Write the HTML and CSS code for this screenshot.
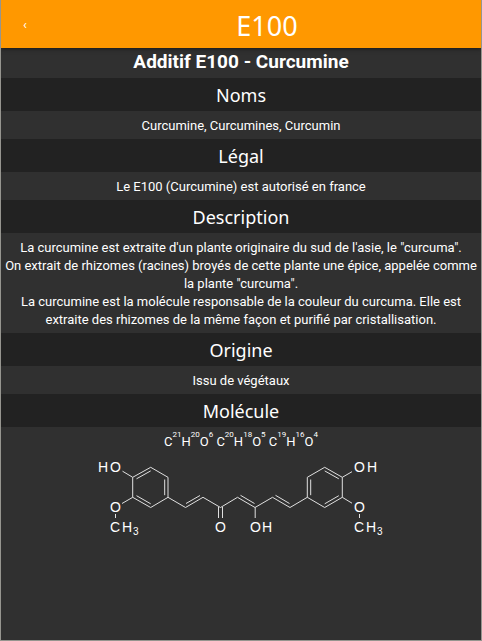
FILE: index.html
```
<!DOCTYPE html>
<html lang="fr">
<head>
<meta charset="utf-8">
<meta name="viewport" content="width=device-width, initial-scale=1">
<title>E100</title>
<link rel="stylesheet" href="styles.css">
</head>
<body>
<header class="bar">
  <a class="back" href="#" aria-label="Retour">‹</a>
  <h1 class="bar-title">E100</h1>
</header>
<main class="sheet">
  <h2 class="name">Additif E100 - Curcumine</h2>
  <h3 class="heading">Noms</h3>
  <p class="text">Curcumine, Curcumines, Curcumin</p>
  <h3 class="heading">Légal</h3>
  <p class="text">Le E100 (Curcumine) est autorisé en france</p>
  <h3 class="heading">Description</h3>
  <p class="text">La curcumine est extraite d'un plante originaire du sud de l'asie, le "curcuma".<br>On extrait de rhizomes (racines) broyés de cette plante une épice, appelée comme la plante "curcuma".<br>La curcumine est la molécule responsable de la couleur du curcuma. Elle est extraite des rhizomes de la même façon et purifié par cristallisation.</p>
  <h3 class="heading">Origine</h3>
  <p class="text">Issu de végétaux</p>
  <h3 class="heading">Molécule</h3>
  <p class="text formula">C<sup>21</sup>H<sup>20</sup>O<sup>6</sup> C<sup>20</sup>H<sup>18</sup>O<sup>5</sup> C<sup>19</sup>H<sup>16</sup>O<sup>4</sup></p>
  <svg class="molecule" viewBox="90 455 302 85" width="302" height="85" role="img" aria-label="Curcumine">
    <g class="bonds">
      <path d="M132.7 477.3L150.7 467.3L168 477.3V497.3L150.7 507.5L132.7 497.3Z"/>
      <path d="M136.5 478.8L150.7 470.9M164.7 479.5V495.2M150.7 503.8L136.5 495.7"/>
      <path d="M132.7 477.3L122.5 471.2M132.7 497.3L122 503.5M115.5 514V518"/>
      <path d="M168 497.3L185.5 507.5L203 497.3L220.5 507.5L237.5 497.3L255 507.5L272.5 497.3L290 507.5L307.3 497.3"/>
      <path d="M186 503.5L200 495.5M240.5 495.3L254.5 503.5M275.5 495.3L289.5 503.5"/>
      <path d="M218.5 507V518M222.5 507V518M255.2 507.5V518"/>
      <path d="M307.3 477.3L324.7 467.3L342.3 477.3V497.3L324.7 507.5L307.3 497.3Z"/>
      <path d="M324.7 470.9L338.8 478.8M310.7 479.5V495.2M324.7 503.8L338.8 495.7"/>
      <path d="M342.3 477.3L352 471.7M342.3 497.3L352 503.2M359.5 514V518"/>
    </g>
    <g class="atoms">
      <text x="98 110" y="472">HO</text>
      <text x="110" y="512">O</text>
      <text x="110 122" y="532">CH</text>
      <text class="index" x="133" y="535">3</text>
      <text x="215" y="532">O</text>
      <text x="250 262" y="532">OH</text>
      <text x="354 367" y="472">OH</text>
      <text x="354" y="512">O</text>
      <text x="354 366" y="532">CH</text>
      <text class="index" x="377" y="535">3</text>
    </g>
  </svg>
</main>
</body>
</html>
```
FILE: styles.css
```
* {
  box-sizing: border-box;
}

body {
  margin: 0;
  min-height: 100vh;
  border: 1px solid #96958f;
  border-top: 0;
  background: #303030;
  color: #fff;
  font: 13px/18px Roboto, sans-serif;
  text-align: center;
}

.bar {
  position: relative;
  display: grid;
  grid-template-columns: 52px 1fr;
  align-items: center;
  height: 48px;
  background: #ff9800;
  box-shadow: 0 1px 4px rgba(0, 0, 0, 0.5);
}

.back {
  padding: 2px 4px 0 0;
  color: #fff;
  font-size: 13px;
  text-decoration: none;
}

.bar-title {
  margin: 0;
  padding-top: 4px;
  font: 400 27px/44px "Noto Sans", sans-serif;
}

.name {
  margin: 0;
  padding: 2px 0 4px;
  font-size: 19px;
  line-height: 24px;
  font-weight: 700;
}

.heading {
  margin: 0;
  padding: 5px 0 4px;
  background: #222;
  font: 400 18px/24px "Noto Sans", sans-serif;
}

.text {
  margin: 0;
  padding: 6px 2px 4px;
}

.formula sup {
  font-size: 8px;
  line-height: 0;
  vertical-align: 9px;
}

.molecule {
  display: block;
  margin: 0 auto;
  max-width: 100%;
}

.bonds {
  fill: none;
  stroke: #e0e0e0;
  stroke-width: 1;
}

.atoms {
  fill: #fff;
  font: 14px "Liberation Sans", sans-serif;
}

.index {
  font-size: 10px;
}
```
